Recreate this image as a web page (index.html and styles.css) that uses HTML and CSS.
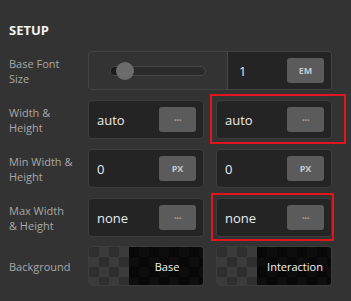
FILE: index.html
```html
<!DOCTYPE html>
<html>
<head>
<meta charset="utf-8">
<link rel="stylesheet" href="styles.css">
</head>
<body>
<div class="panel">
  <h2 class="title">SETUP</h2>
  <div class="rows">
    <div class="row">
      <div class="label">Base Font<br>Size</div>
      <div class="combo">
        <div class="slider">
          <div class="track"><div class="fill"></div><div class="knob"></div></div>
        </div>
        <div class="numbox">
          <span class="val">1</span>
          <span class="btn unit">EM</span>
        </div>
      </div>
    </div>
    <div class="row">
      <div class="label">Width &amp;<br>Height</div>
      <div class="pair">
        <div class="field"><span class="val">auto</span><span class="btn dots">···</span></div>
        <div class="field hl1"><span class="val">auto</span><span class="btn dots">···</span></div>
      </div>
    </div>
    <div class="row">
      <div class="label">Min Width &amp;<br>Height</div>
      <div class="pair">
        <div class="field"><span class="val">0</span><span class="btn unit">PX</span></div>
        <div class="field"><span class="val">0</span><span class="btn unit">PX</span></div>
      </div>
    </div>
    <div class="row">
      <div class="label">Max Width<br>&amp; Height</div>
      <div class="pair">
        <div class="field"><span class="val">none</span><span class="btn dots">···</span></div>
        <div class="field hl2"><span class="val">none</span><span class="btn dots">···</span></div>
      </div>
    </div>
    <div class="row bgrow">
      <div class="label">Background</div>
      <div class="pair">
        <div class="swatch"><span class="check"></span><span class="dark">Base</span></div>
        <div class="swatch"><span class="check"></span><span class="dark">Interaction</span></div>
      </div>
    </div>
  </div>
</div>
</body>
</html>
```
FILE: styles.css
```css
* { box-sizing: border-box; }
html, body {
  margin: 0;
  padding: 0;
  background: #333333;
  width: 351px;
  height: 301px;
  overflow: hidden;
}
.panel {
  padding: 0 0 0 9px;
  font-family: "Open Sans", "Noto Sans", sans-serif;
}
.title {
  margin: 0;
  padding-top: 20px;
  height: 51px;
  font-size: 13px;
  font-weight: 700;
  color: #f2f2f2;
  line-height: 20px;
  letter-spacing: 0;
}
.rows {
  display: flex;
  flex-direction: column;
  gap: 10px;
}
.row {
  display: grid;
  grid-template-columns: 79px 244px;
  align-items: center;
  height: 39px;
}
.bgrow { height: 40px; margin-top: -1px; }
.label {
  font-size: 11px;
  line-height: 15px;
  color: #a8a8a8;
}
.combo {
  display: flex;
  height: 39px;
  border: 1px solid #434343;
  border-radius: 4px;
  overflow: hidden;
}
.slider {
  width: 139px;
  border-right: 1px solid #474747;
  display: flex;
  align-items: center;
  padding-left: 21px;
}
.track {
  position: relative;
  width: 96px;
  height: 10px;
  border: 1px solid #474747;
  border-radius: 5px;
  background: #2b2b2b;
}
.fill {
  position: absolute;
  left: 0; top: 0; bottom: 0;
  width: 14px;
  border-radius: 5px 0 0 5px;
  background: #1a1a1a;
}
.knob {
  position: absolute;
  left: 5px;
  top: -5px;
  width: 18px;
  height: 18px;
  border-radius: 50%;
  background: #6c6c6c;
}
.numbox {
  flex: 1;
  background: #242424;
  display: flex;
  align-items: center;
  justify-content: space-between;
  padding: 0 7px 0 11px;
}
.val {
  font-size: 13px;
  color: #ececec;
}
.btn {
  width: 37px;
  height: 25px;
  border-radius: 3px;
  background: #5b5b5b;
  color: #c8c8c8;
  display: flex;
  align-items: center;
  justify-content: center;
  font-weight: 700;
  font-size: 9px;
}
.dots { color: #a0a0a0; font-size: 10px; font-weight: 700; letter-spacing: -0.5px; }
.pair {
  display: grid;
  grid-template-columns: 116px 116px;
  gap: 12px;
}
.field {
  position: relative;
  height: 39px;
  background: #242424;
  border: 1px solid #3c3c3c;
  border-radius: 4px;
  display: flex;
  align-items: center;
  justify-content: space-between;
  padding: 0 7px 0 8px;
}
.hl1::after, .hl2::after {
  content: "";
  position: absolute;
  border: 2px solid #e3141b;
  pointer-events: none;
}
.hl1::after { left: -7px; top: -7px; right: -15px; bottom: -6px; }
.hl2::after { left: -6px; top: -6px; right: -3px; bottom: -5px; }
.swatch {
  height: 40px;
  border: 1px solid #3c3c3c;
  border-radius: 4px;
  overflow: hidden;
  display: flex;
}
.check {
  width: 40px;
  background: repeating-conic-gradient(#3b3b3b 0 25%, #2f2f2f 0 50%) 0 0 / 20px 20px;
}
.dark {
  flex: 1;
  background: repeating-conic-gradient(#0d0d0d 0 25%, #080808 0 50%) 0 0 / 20px 20px;
  color: #f4f4f4;
  font-size: 11px;
  display: flex;
  align-items: center;
  justify-content: center;
  padding-left: 2px;
}
```
